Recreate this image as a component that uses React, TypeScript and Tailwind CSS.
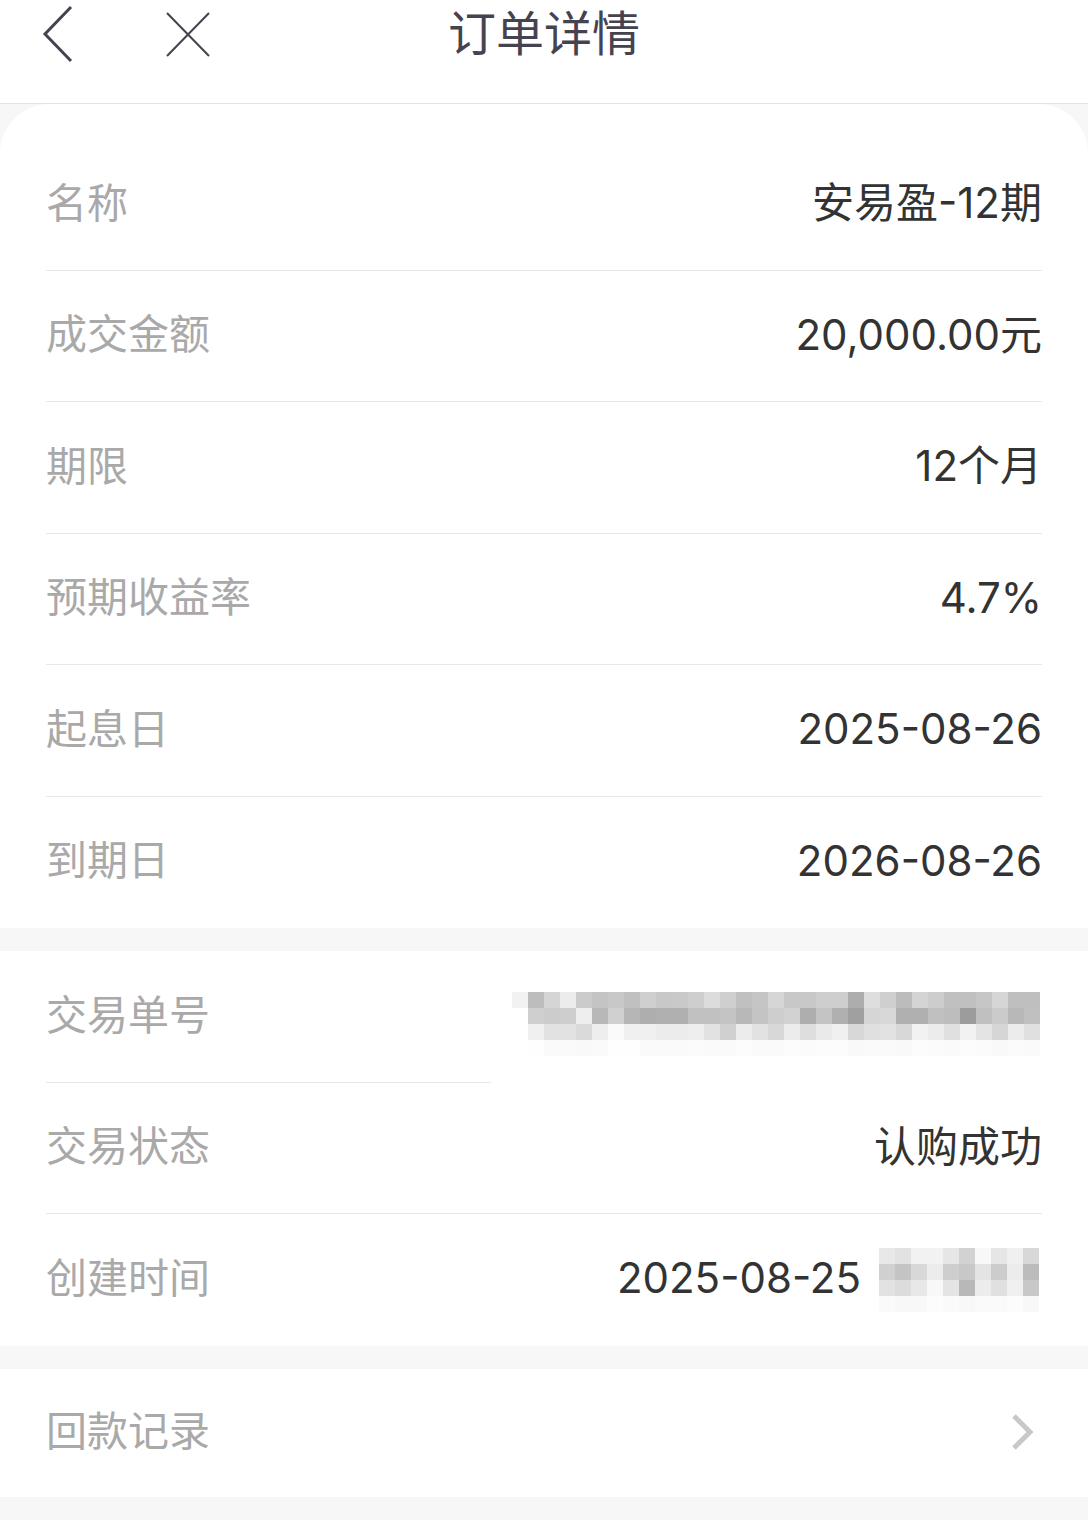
import React from 'react';

const font = "font-['Inter','Noto_Sans_CJK_SC',sans-serif]";

interface Row {
  label: string;
  value: React.ReactNode;
}

// mosaic over the order number
const orderMosaic: number[][] = [
  [0xf2, 0xbd, 0xd5, 0xec, 0xcb, 0xc4, 0xc8, 0xc0, 0xcf, 0xc8, 0xc9, 0xce, 0xdc, 0xcf, 0xc0, 0xc5, 0xd6, 0xc8, 0xc8, 0xce, 0xce, 0xad, 0xde, 0xcf, 0xbc, 0xd4, 0xcd, 0xc0, 0xc0, 0xc6, 0xd6, 0xbf, 0xbf],
  [0xff, 0xcf, 0xcc, 0xce, 0xee, 0xb8, 0xd0, 0xb6, 0xae, 0xb0, 0xb0, 0xc1, 0xc1, 0xc4, 0xb8, 0xc4, 0xce, 0xd2, 0xae, 0xc4, 0xb0, 0xa0, 0xd6, 0xd8, 0xb0, 0xb0, 0xc0, 0xbd, 0x9c, 0xc0, 0xcb, 0xb8, 0xc0],
  [0xff, 0xf0, 0xe2, 0xe2, 0xda, 0xee, 0xfa, 0xf0, 0xf0, 0xec, 0xec, 0xee, 0xe2, 0xd0, 0xec, 0xe2, 0xd8, 0xec, 0xde, 0xea, 0xf0, 0xd8, 0xe0, 0xe2, 0xd8, 0xf2, 0xec, 0xe0, 0xf2, 0xe4, 0xd6, 0xec, 0xe0],
  [0xff, 0xfe, 0xfa, 0xfa, 0xf9, 0xfa, 0xfe, 0xfe, 0xfa, 0xfa, 0xfa, 0xfb, 0xfa, 0xfa, 0xfc, 0xfa, 0xfa, 0xfc, 0xfb, 0xfc, 0xfc, 0xf9, 0xfa, 0xfa, 0xf9, 0xfc, 0xfb, 0xfa, 0xfc, 0xfb, 0xf9, 0xfb, 0xfa],
];

// mosaic over the creation time
const timeMosaic: number[][] = [
  [0xe8, 0xe2, 0xf2, 0xf2, 0xe6, 0xd2, 0xf8, 0xe6, 0xf0, 0xd8],
  [0xd0, 0xc4, 0xd8, 0xec, 0xce, 0xc8, 0xe4, 0xcc, 0xec, 0xbc],
  [0xe2, 0xdc, 0xe8, 0xf8, 0xe4, 0xb8, 0xec, 0xe0, 0xf0, 0xc8],
  [0xfa, 0xf8, 0xf8, 0xfc, 0xfa, 0xf8, 0xfa, 0xfa, 0xfc, 0xf8],
];

function Mosaic({ data }: { data: number[][] }) {
  return (
    <div className="flex flex-col">
      {data.map((row, r) => (
        <div key={r} className="flex">
          {row.map((v, c) => (
            <div
              key={c}
              className="w-4 h-4"
              style={{ backgroundColor: `rgb(${v},${v},${v})` }}
            />
          ))}
        </div>
      ))}
    </div>
  );
}

function InfoRow({ row, last, shortLine }: { row: Row; last?: boolean; shortLine?: boolean }) {
  return (
    <div className="relative h-[131.5px] pb-[3px] flex items-center justify-between">
      <span className="text-[41px] text-[#a9a9a9] leading-none">{row.label}</span>
      <div className="text-[42px] text-[#333333] leading-none flex items-center">{row.value}</div>
      {!last && (
        <div
          className={`absolute left-0 bottom-0 h-px bg-[#e8e8e8] ${shortLine ? 'w-[445px]' : 'w-full'}`}
        />
      )}
    </div>
  );
}

export default function App() {
  const detailRows: Row[] = [
    { label: '名称', value: '安易盈-12期' },
    { label: '成交金额', value: '20,000.00元' },
    { label: '期限', value: '12个月' },
    { label: '预期收益率', value: '4.7%' },
    { label: '起息日', value: '2025-08-26' },
    { label: '到期日', value: '2026-08-26' },
  ];

  const tradeRows: Row[] = [
    {
      label: '交易单号',
      value: (
        <div className="mt-[18px] mr-[2px]">
          <Mosaic data={orderMosaic} />
        </div>
      ),
    },
    { label: '交易状态', value: '认购成功' },
    {
      label: '创建时间',
      value: (
        <div className="flex items-center gap-[18px]">
          <span>2025-08-25</span>
          <div className="mt-[4px] mr-[3px]">
            <Mosaic data={timeMosaic} />
          </div>
        </div>
      ),
    },
  ];

  return (
    <div className={`w-[1088px] min-h-[1520px] bg-[#f7f7f7] ${font}`}>
      <header className="h-[104px] bg-white border-b border-[#e4e4e4]">
        <div className="grid grid-cols-[1fr_auto_1fr] items-center h-[68px]">
          <div className="flex items-center pl-[42px] gap-[93px]">
            <svg width="31" height="58" viewBox="0 0 31 58" fill="none">
              <polyline points="29,2 3,29 29,56" stroke="#45434f" strokeWidth="3" strokeLinejoin="miter" />
            </svg>
            <svg width="44" height="45" viewBox="0 0 44 45" fill="none">
              <line x1="1" y1="1" x2="43" y2="44" stroke="#45434f" strokeWidth="2" />
              <line x1="43" y1="1" x2="1" y2="44" stroke="#45434f" strokeWidth="2" />
            </svg>
          </div>
          <h1 className="text-[48px] text-[#45434f] leading-none font-normal">订单详情</h1>
          <div />
        </div>
      </header>

      <section className="bg-white rounded-t-[50px] pt-[35px] px-[46px]">
        {detailRows.map((row, i) => (
          <InfoRow key={row.label} row={row} last={i === detailRows.length - 1} />
        ))}
      </section>

      <section className="mt-[23px] bg-white px-[46px]">
        {tradeRows.map((row, i) => (
          <InfoRow key={row.label} row={row} last={i === tradeRows.length - 1} shortLine={i === 0} />
        ))}
      </section>

      <section className="mt-[23px] bg-white px-[46px] h-[128px] pb-[2px] flex items-center justify-between">
        <span className="text-[41px] text-[#a9a9a9] leading-none">回款记录</span>
        <svg width="24" height="38" viewBox="0 0 24 38" fill="none" className="mr-[8px]">
          <polyline points="4,3 20,19 4,35" stroke="#c8c8c8" strokeWidth="5" />
        </svg>
      </section>
    </div>
  );
}
